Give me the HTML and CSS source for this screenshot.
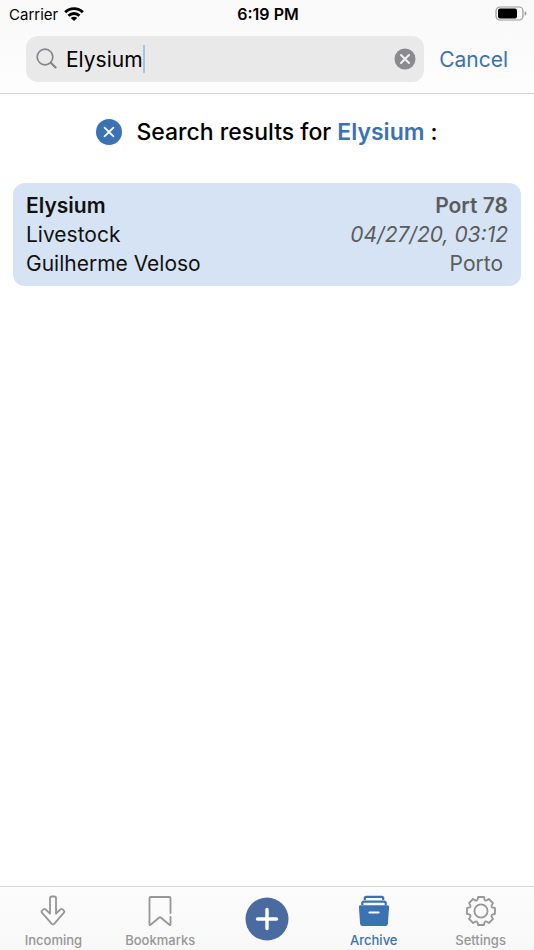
FILE: index.html
```html
<!DOCTYPE html>
<html lang="en">
<head>
    <meta charset="UTF-8">
    <meta name="viewport" content="width=device-width, initial-scale=1.0">
    <title>Archive - Search</title>
    <link rel="stylesheet" href="styles.css">
</head>
<body>
    <!-- Status bar and search -->
    <header class="top-bar">
        <div class="status-bar">
            <div class="carrier">
                <span>Carrier</span>
                <svg width="20" height="14" viewBox="0 0 20 14" aria-hidden="true">
                    <g fill="none" stroke="#000" stroke-width="2.9">
                        <path d="M1.2 5.2a12.6 12.6 0 0 1 17.6 0"/>
                        <path d="M4.5 8.8a7.9 7.9 0 0 1 11 0"/>
                    </g>
                    <path d="M10 14l-3.2-3a4.6 4.6 0 0 1 6.4 0z"/>
                </svg>
            </div>
            <div class="clock">6:19 PM</div>
            <svg class="battery" width="32" height="16" viewBox="0 0 32 16" aria-hidden="true">
                <rect x="1" y="1" width="27" height="13" rx="4" fill="none" stroke="#999" stroke-width="1.2"/>
                <rect x="3" y="2.6" width="19" height="9.8" rx="2"/>
                <path d="M29.6 5.3q1.8.6 1.8 2.2t-1.8 2.2z" fill="#999"/>
            </svg>
        </div>
        <form class="search-row" role="search">
            <div class="search-field">
                <svg width="22" height="22" viewBox="0 0 22 22" fill="none" stroke="#85858a" aria-hidden="true">
                    <circle cx="9" cy="9" r="7.8" stroke-width="1.7"/>
                    <path d="M14.8 14.8l4.8 4.7" stroke-width="2.2" stroke-linecap="round"/>
                </svg>
                <input class="search-input" type="text" value="Elysium" aria-label="Search">
                <span class="caret"></span>
                <button class="clear" type="button" aria-label="Clear text">
                    <svg width="22" height="22" viewBox="0 0 22 22">
                        <circle cx="11" cy="11" r="10.5" fill="#8a8a8f"/>
                        <path d="M7 7l8 8M15 7l-8 8" stroke="#f2f2f2" stroke-width="2" stroke-linecap="round"/>
                    </svg>
                </button>
            </div>
            <button class="cancel" type="button">Cancel</button>
        </form>
    </header>

    <!-- Results -->
    <main class="results">
        <div class="results-header">
            <button class="reset" type="button" aria-label="Reset search">
                <svg width="26" height="26" viewBox="0 0 26 26">
                    <circle cx="13" cy="13" r="13" fill="#3a72b4"/>
                    <path d="M8.6 8.6l8.8 8.8M17.4 8.6l-8.8 8.8" stroke="#fff" stroke-width="1.8" stroke-linecap="round"/>
                </svg>
            </button>
            <h1 class="results-title">Search results for <span class="query">Elysium</span> :</h1>
        </div>
        <article class="result-card">
            <div class="result-line ship">
                <span>Elysium</span>
                <span class="detail">Port 78</span>
            </div>
            <div class="result-line">
                <span>Livestock</span>
                <time class="detail date">04/27/20, 03:12</time>
            </div>
            <div class="result-line">
                <span>Guilherme Veloso</span>
                <span class="detail place">Porto</span>
            </div>
        </article>
    </main>

    <!-- Tab bar -->
    <nav class="tab-bar">
        <a class="tab" href="#incoming">
            <svg width="32" height="32" viewBox="0 0 32 32" fill="none" stroke="currentColor" stroke-width="1.8" stroke-linejoin="round">
                <path d="M13 3.2q0-1.7 1.7-1.7h2.6q1.7 0 1.7 1.7v15.5l4.5-4.4q1-.9 2 0l1.4 1.4q1 1 0 2L17.2 28.9q-1.2 1.1-2.4 0L4.9 17.7q-.9-1 .1-2l1.5-1.4q1-.9 2 0l4.5 4.4z"/>
            </svg>
            <span>Incoming</span>
        </a>
        <a class="tab" href="#bookmarks">
            <svg width="32" height="32" viewBox="0 0 32 32" fill="none" stroke="currentColor" stroke-width="1.8" stroke-linejoin="round" stroke-linecap="round">
                <path d="M26.5 18V3.2q0-1.2-1.2-1.2H6.7Q5.5 2 5.5 3.2v26.1q0 1.4 1.1.5l8.7-7.3q.7-.6 1.4 0l8.7 7.3q1.1.9 1.1-.5V22"/>
            </svg>
            <span>Bookmarks</span>
        </a>
        <a class="tab tab-add" href="#new" aria-label="New">
            <svg width="44" height="44" viewBox="0 0 44 44">
                <circle cx="22" cy="22" r="21.5" fill="#4a6ba2"/>
                <path d="M22 12.5v19M12.5 22h19" stroke="#fff" stroke-width="3.4" stroke-linecap="round"/>
            </svg>
        </a>
        <a class="tab active" href="#archive">
            <svg width="32" height="32" viewBox="0 0 32 32" fill="none" stroke="currentColor" stroke-linejoin="round">
                <path d="M6.8 5V3.2q0-1.4 1.4-1.4h15.6q1.4 0 1.4 1.4V5" stroke-width="2.2"/>
                <path d="M4.3 10V8.2q0-1.5 1.5-1.5h20.4q1.5 0 1.5 1.5V10" stroke-width="2.2"/>
                <path d="M2.4 10.2h27.2q1.7 0 1.5 1.7l-1.2 16.8q-.2 2.3-2.4 2.3h-23q-2.2 0-2.4-2.3L.9 11.9q-.2-1.7 1.5-1.7z" fill="currentColor" stroke="none"/>
                <path d="M11.5 17.5h9" stroke="#fff" stroke-width="2.2" stroke-linecap="round"/>
            </svg>
            <span>Archive</span>
        </a>
        <a class="tab" href="#settings">
            <svg width="32" height="32" viewBox="-16 -16 32 32" fill="none" stroke="currentColor" stroke-width="1.8" stroke-linejoin="round">
                <path d="M-3.6-11.2L-2.9-14H2.9L3.6-11.2Q4.2-10.2 5.4-10.5L7.9-12L12-7.9L10.5-5.4Q10.2-4.2 11.2-3.6L14-2.9V2.9L11.2 3.6Q10.2 4.2 10.5 5.4L12 7.9L7.9 12L5.4 10.5Q4.2 10.2 3.6 11.2L2.9 14H-2.9L-3.6 11.2Q-4.2 10.2-5.4 10.5L-7.9 12L-12 7.9L-10.5 5.4Q-10.2 4.2-11.2 3.6L-14 2.9V-2.9L-11.2-3.6Q-10.2-4.2-10.5-5.4L-12-7.9L-7.9-12L-5.4-10.5Q-4.2-10.2-3.6-11.2z"/>
                <circle r="6.6"/>
            </svg>
            <span>Settings</span>
        </a>
    </nav>
</body>
</html>
```
FILE: styles.css
```css
* {
    margin: 0;
    padding: 0;
    box-sizing: border-box;
}

body {
    font-family: Inter, "Liberation Sans", sans-serif;
    font-size: 21px;
    color: #111;
    background: #fff;
    min-height: 100vh;
    display: flex;
    flex-direction: column;
}

button,
input {
    font: inherit;
    color: inherit;
    background: none;
    border: none;
    outline: none;
}

button {
    cursor: pointer;
}

svg {
    display: block;
    flex-shrink: 0;
}

/* Header */
.top-bar {
    background: linear-gradient(#f9f9f9, #fdfdfd);
    border-bottom: 1px solid #d5d5d5;
    padding-bottom: 11px;
}

.status-bar {
    display: grid;
    grid-template-columns: 1fr auto 1fr;
    align-items: center;
    height: 28px;
    padding: 0 7px 0 9px;
    font-size: 15px;
    color: #000;
}

.carrier {
    display: flex;
    align-items: center;
    gap: 6px;
}

.clock {
    font-size: 16px;
    font-weight: 600;
}

.battery {
    justify-self: end;
}

.search-row {
    display: flex;
    align-items: center;
    gap: 15px;
    padding: 8px 26px 0;
}

.search-field {
    flex: 1;
    display: flex;
    align-items: center;
    height: 46px;
    padding: 0 8px 0 10px;
    border-radius: 12px;
    background: #e9e9ea;
}

.search-input {
    field-sizing: content;
    min-width: 0;
    margin-left: 8px;
    color: #000;
}

.caret {
    width: 2px;
    height: 28px;
    background: #a9c3e2;
}

.clear {
    margin-left: auto;
}

.cancel {
    color: #3a72b4;
}

/* Results */
.results {
    flex: 1;
    padding: 23px 13px;
}

.results-header {
    display: flex;
    align-items: center;
    justify-content: center;
    gap: 14px;
    margin-bottom: 36px;
}

.results-title {
    font-size: 23px;
    line-height: 30px;
    font-weight: 500;
    color: #000;
}

.query {
    font-weight: 600;
    color: #3a72b4;
}

.result-card {
    padding: 8px 13px;
    border-radius: 12px;
    background: #d5e3f4;
}

.result-line {
    display: flex;
    justify-content: space-between;
    line-height: 29px;
}

.ship {
    font-weight: 600;
}

.detail {
    color: #5c5c5c;
}

.date {
    font-style: italic;
}

.place {
    padding-right: 5px;
}

/* Tab bar */
.tab-bar {
    display: grid;
    grid-template-columns: repeat(5, 1fr);
    height: 64px;
    border-top: 1px solid #d5d5d5;
    background: linear-gradient(#fcfcfc, #f8f8f8);
}

.tab {
    display: flex;
    flex-direction: column;
    align-items: center;
    padding-top: 8px;
    gap: 5px;
    font-size: 13px;
    line-height: 16px;
    font-weight: 500;
    color: #969696;
    text-decoration: none;
}

.tab-add {
    padding: 0;
    justify-content: center;
}

.active {
    color: #3a72b4;
}
```
